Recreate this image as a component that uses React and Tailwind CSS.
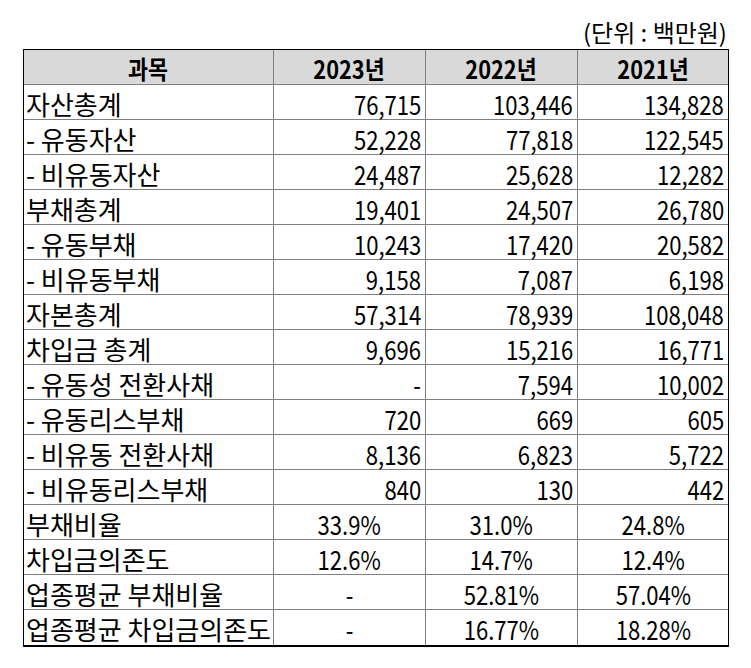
import React from "react";

const rows = [
  ["자산총계", "76,715", "103,446", "134,828", "r"],
  ["- 유동자산", "52,228", "77,818", "122,545", "r"],
  ["- 비유동자산", "24,487", "25,628", "12,282", "r"],
  ["부채총계", "19,401", "24,507", "26,780", "r"],
  ["- 유동부채", "10,243", "17,420", "20,582", "r"],
  ["- 비유동부채", "9,158", "7,087", "6,198", "r"],
  ["자본총계", "57,314", "78,939", "108,048", "r"],
  ["차입금 총계", "9,696", "15,216", "16,771", "r"],
  ["- 유동성 전환사채", "-", "7,594", "10,002", "r"],
  ["- 유동리스부채", "720", "669", "605", "r"],
  ["- 비유동 전환사채", "8,136", "6,823", "5,722", "r"],
  ["- 비유동리스부채", "840", "130", "442", "r"],
  ["부채비율", "33.9%", "31.0%", "24.8%", "c"],
  ["차입금의존도", "12.6%", "14.7%", "12.4%", "c"],
  ["업종평균 부채비율", "-", "52.81%", "57.04%", "c"],
  ["업종평균 차입금의존도", "-", "16.77%", "18.28%", "c"],
];

const font = { fontFamily: '"Noto Sans CJK KR", "Noto Sans", sans-serif' };

export default function App() {
  return (
    <div className="w-[751px] h-[668px] bg-white text-black" style={font}>
      <div className="ml-[23px] w-[706px]">
        <div className="h-[49px] flex items-end justify-end pb-[5px] pr-[2px] text-[24px] leading-none">
          (단위 : 백만원)
        </div>
        <div className="border-t border-l border-r border-b-2 border-black grid grid-cols-[250px_152px_152px_150px]">
          {["과목", "2023년", "2022년", "2021년"].map((h, i) => (
            <div
              key={h}
              className={`h-[35px] bg-[#d9d9d9] border-b border-[#808080] flex items-center justify-center text-[25px] font-bold leading-none ${i < 3 ? "border-r" : ""}`}
            >
              <span className="inline-block scale-x-[0.87] pt-[2px]">{h}</span>
            </div>
          ))}
          {rows.map((r, ri) => {
            const last = ri === rows.length - 1;
            return (
              <React.Fragment key={ri}>
                <div
                  className={`h-[35px] border-r border-[#808080] ${last ? "" : "border-b"} flex items-center pl-[2px] text-[26px] leading-none whitespace-nowrap`}
                >
                  <span className="inline-block pt-[3px]">{r[0]}</span>
                </div>
                {[1, 2, 3].map((c) => {
                  const center = r[4] === "c";
                  return (
                    <div
                      key={c}
                      className={`h-[35px] border-[#808080] ${c < 3 ? "border-r" : ""} ${last ? "" : "border-b"} flex items-center ${center ? "justify-center" : "justify-end pr-[4px]"} text-[26px] leading-none whitespace-nowrap`}
                    >
                      <span className={`inline-block scale-x-[0.85] pt-[3px] ${center ? "" : "origin-right"}`}>{r[c]}</span>
                    </div>
                  );
                })}
              </React.Fragment>
            );
          })}
        </div>
      </div>
    </div>
  );
}
